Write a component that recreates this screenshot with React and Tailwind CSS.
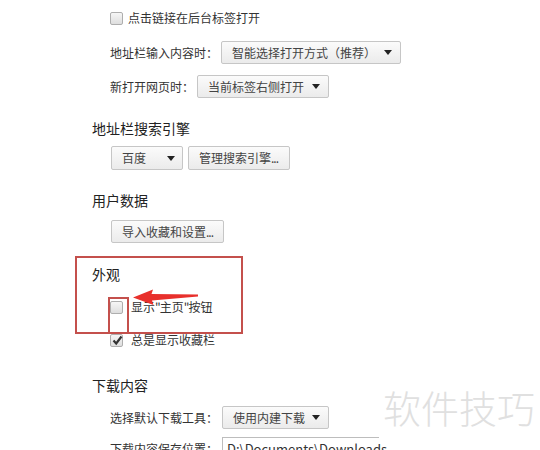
import React from "react";

const FONT = { fontFamily: '"Noto Sans CJK SC", "Noto Sans", sans-serif' };

function Arrow() {
  return <span className="ml-auto w-0 h-0 border-l-[4px] border-r-[4px] border-t-[5px] border-l-transparent border-r-transparent border-t-[#222]"></span>;
}

function Select({ width, text }) {
  return (
    <div
      className="flex items-center h-[23px] pl-[10px] pr-[8px] border border-[#c6c6c6] rounded-[2px] bg-gradient-to-b from-[#fbfbfb] to-[#ebebeb] text-[#444] whitespace-nowrap"
      style={{ width }}
    >
      <span>{text}</span>
      <Arrow />
    </div>
  );
}

function Button({ children, width }) {
  return (
    <div
      className="flex items-center h-[23px] pl-[10px] border border-[#c6c6c6] rounded-[2px] bg-gradient-to-b from-[#fbfbfb] to-[#ebebeb] text-[#444] whitespace-nowrap overflow-hidden"
      style={{ width }}
    >
      {children}
    </div>
  );
}

function Checkbox({ checked }) {
  return (
    <div className="relative w-[13px] h-[13px] border border-[#aeaeae] rounded-[2px] bg-gradient-to-b from-[#f6f6f6] to-[#dedede] shrink-0">
      {checked && (
        <svg className="absolute left-[1px] top-[0px]" width="11" height="11" viewBox="0 0 11 11">
          <path d="M1.5 5.5 L4.2 8.5 L9.5 1.5" fill="none" stroke="#333" strokeWidth="2.2" />
        </svg>
      )}
    </div>
  );
}

export default function App() {
  return (
    <div className="relative w-[540px] h-[450px] overflow-hidden bg-white text-[12px] text-[#333]" style={FONT}>
      <div className="pl-[92px]">
        {/* 标签页 */}
        <div className="ml-[18px] mt-[10px] h-[16px] flex items-center">
          <Checkbox />
          <span className="ml-[5px]">点击链接在后台标签打开</span>
        </div>

        <div className="ml-[18px] mt-[15px] flex items-center">
          <span className="w-[111px]">地址栏输入内容时：</span>
          <Select width="180px" text="智能选择打开方式（推荐）" />
        </div>

        <div className="ml-[18px] mt-[11px] flex items-center">
          <span className="w-[87px]">新打开网页时：</span>
          <Select width="132px" text="当前标签右侧打开" />
        </div>

        {/* 搜索引擎 */}
        <div className="mt-[20px] h-[20px] flex items-center text-[14px] text-[#222]">地址栏搜索引擎</div>
        <div className="ml-[19px] mt-[8px] flex items-center gap-[5px]">
          <div className="flex items-center h-[24px] w-[72px] pl-[10px] pr-[7px] border border-[#c6c6c6] rounded-[2px] bg-gradient-to-b from-[#fbfbfb] to-[#ebebeb] text-[#444]">
            <span>百度</span>
            <Arrow />
          </div>
          <div className="flex items-center h-[24px] w-[102px] pl-[10px] border border-[#c6c6c6] rounded-[2px] bg-gradient-to-b from-[#fbfbfb] to-[#ebebeb] text-[#444] whitespace-nowrap overflow-hidden">
            管理搜索引擎<span className="tracking-[-1px]">...</span>
          </div>
        </div>

        {/* 用户数据 */}
        <div className="mt-[20px] h-[20px] flex items-center text-[14px] text-[#222]">用户数据</div>
        <div className="ml-[19px] mt-[10px]">
          <Button width="113px">
            导入收藏和设置<span className="tracking-[-1px]">...</span>
          </Button>
        </div>

        {/* 外观 */}
        <div className="mt-[21px] h-[20px] flex items-center text-[14px] text-[#222]">外观</div>
        <div className="ml-[18px] mt-[15px] h-[16px] flex items-center">
          <Checkbox />
          <span className="ml-[8px] whitespace-nowrap">
            显示<span className="tracking-[-1px]">"</span>主页<span className="tracking-[-1px]">"</span>按钮
          </span>
        </div>
        <div className="ml-[18px] mt-[17px] h-[16px] flex items-center">
          <Checkbox checked />
          <span className="ml-[8px]">总是显示收藏栏</span>
        </div>

        {/* 下载内容 */}
        <div className="mt-[27px] h-[20px] flex items-center text-[14px] text-[#222]">下载内容</div>
        <div className="ml-[18px] mt-[11px] flex items-center">
          <span className="w-[112px]">选择默认下载工具：</span>
          <Select width="107px" text="使用内建下载" />
        </div>
        <div className="ml-[18px] mt-[8px] flex items-center">
          <span className="w-[112px]">下载内容保存位置：</span>
          <div className="w-[157px] h-[23px] border border-[#bdbdbd] border-r-0 pl-[4px] flex items-center text-[13px] text-[#333] whitespace-nowrap">
            D:\Documents\Downloads
          </div>
        </div>
      </div>

      {/* 标注 */}
      <div className="absolute left-[75px] top-[256px] w-[168px] h-[78px] border-2 border-[#c4504c]"></div>
      <div className="absolute left-[108px] top-[297px] w-[21px] h-[37px] border-2 border-b-0 border-[#c4504c]"></div>
      <svg className="absolute left-0 top-0" width="540" height="450" viewBox="0 0 540 450">
        <path
          d="M133 297.5 L153 289.5 L151.5 294 L198 294.5 L198 296.5 L152 300.5 L153.5 305 Z"
          fill="#e8302c"
        />
      </svg>

      {/* 水印 */}
      <div className="absolute left-[383px] top-[388px] text-[38px] leading-none font-light text-[#e0e0e0]">
        软件技巧
      </div>
    </div>
  );
}
